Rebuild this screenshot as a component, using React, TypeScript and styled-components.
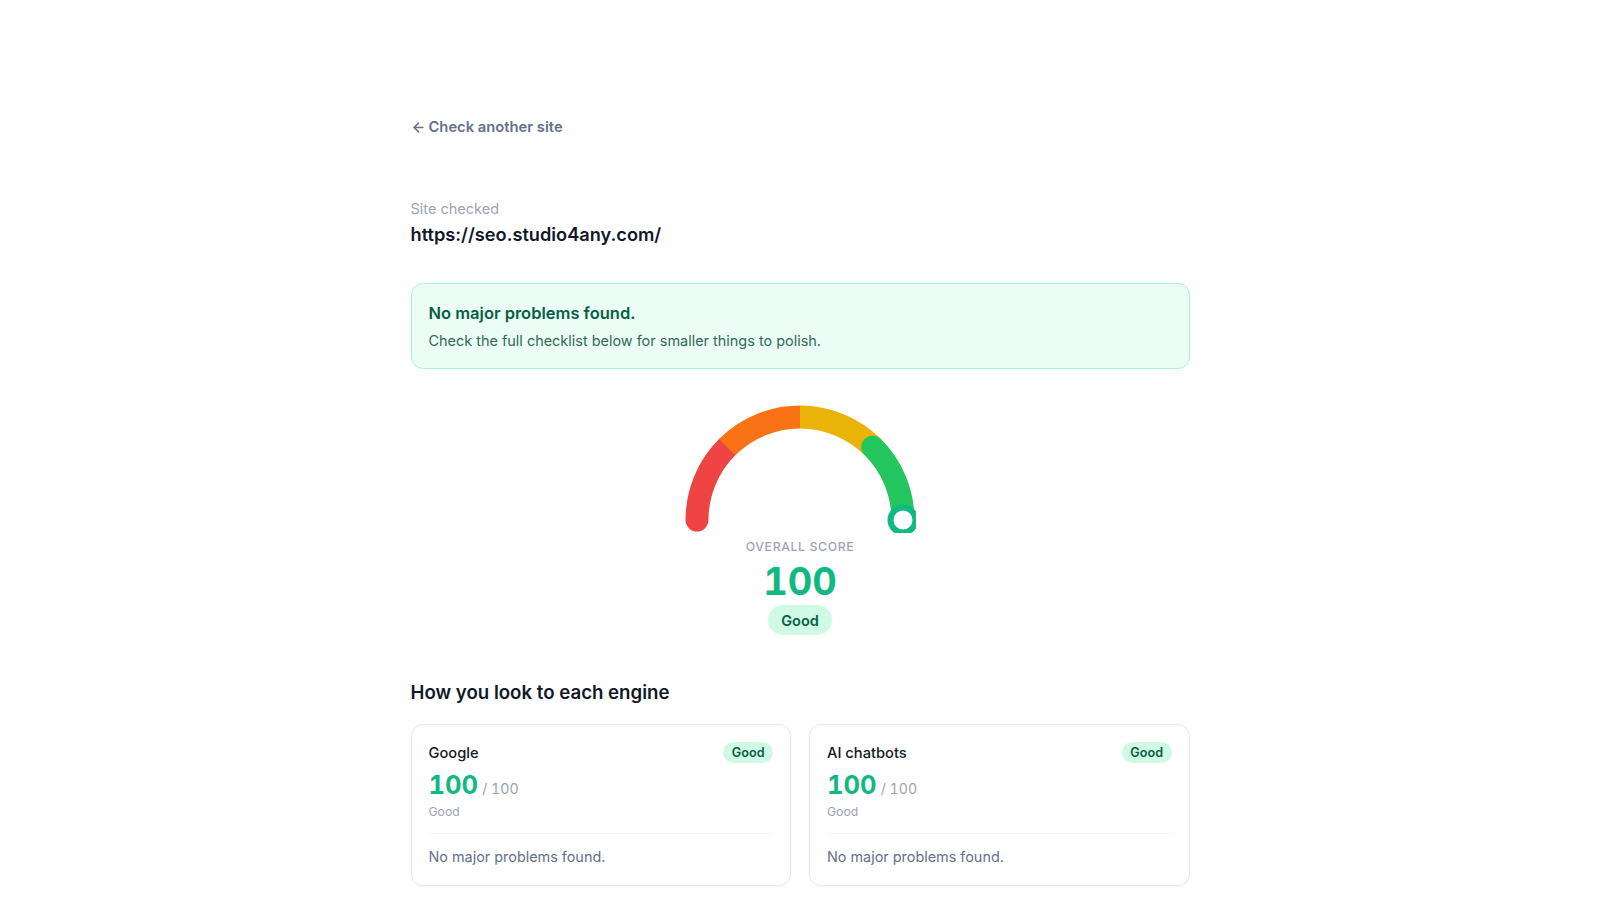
import styled, { createGlobalStyle } from "styled-components";
import { ArrowLeft } from "lucide-react";

const GlobalStyle = createGlobalStyle`
  html, body {
    margin: 0;
    background: #fff;
    font-family: "Inter", "Liberation Sans", sans-serif;
    color: #111827;
  }
`;

const Page = styled.main`
  width: 779px;
  margin: 0 auto;
  padding-top: 117px;
  height: 793px;
  overflow: hidden;
`;

const BackLink = styled.a`
  display: flex;
  align-items: center;
  gap: 3px;
  height: 20px;
  font-size: 14.75px;
  font-weight: 600;
  color: #64708b;
  text-decoration: none;
`;

const SiteBlock = styled.section`
  margin-top: 62px;
`;

const SiteLabel = styled.div`
  font-size: 14.5px;
  line-height: 20px;
  color: #9ca3b8;
`;

const SiteUrl = styled.div`
  margin-top: 1px;
  font-size: 18.2px;
  line-height: 28px;
  font-weight: 600;
  color: #111827;
`;

const Banner = styled.section`
  box-sizing: border-box;
  height: 86px;
  margin-top: 35px;
  padding: 18px 17px;
  border: 1px solid #a7f3d0;
  border-radius: 12px;
  background: #ecfdf5;
`;

const BannerTitle = styled.div`
  font-size: 16.5px;
  line-height: 22px;
  font-weight: 600;
  color: #065f46;
`;

const BannerText = styled.div`
  margin-top: 7px;
  font-size: 14.45px;
  line-height: 20px;
  color: #2f6b58;
`;

const Score = styled.section`
  display: flex;
  flex-direction: column;
  align-items: center;
  margin-top: 31px;
`;

const GaugeSvg = styled.svg`
  display: block;
  width: 232px;
  height: 133px;
`;

const ScoreLabel = styled.div`
  margin-top: 5px;
  font-size: 12.3px;
  line-height: 18px;
  font-weight: 500;
  letter-spacing: 0.6px;
  color: #9ca3b8;
`;

const ScoreValue = styled.div`
  margin-top: 4px;
  font-size: 38px;
  line-height: 42px;
  font-weight: 700;
  font-variant-numeric: tabular-nums;
  color: #10b981;
`;

const ScorePill = styled.div`
  display: flex;
  align-items: center;
  height: 30px;
  margin-top: 3px;
  padding: 0 13px;
  border-radius: 15px;
  background: #d1fae5;
  font-size: 14.5px;
  font-weight: 600;
  color: #065f46;
`;

const SectionTitle = styled.h2`
  margin: 43px 0 0;
  font-size: 18.65px;
  line-height: 28px;
  font-weight: 600;
  color: #111827;
`;

const CardGrid = styled.div`
  display: grid;
  grid-template-columns: 1fr 1fr;
  gap: 18px;
  margin-top: 18px;
`;

const Card = styled.article`
  box-sizing: border-box;
  height: 162px;
  padding: 17px;
  border: 1px solid #e5e7eb;
  border-radius: 12px;
  box-shadow: 0 1px 2px rgba(0, 0, 0, 0.05);
`;

const CardHead = styled.div`
  display: flex;
  justify-content: space-between;
  align-items: center;
  height: 21px;
`;

const CardName = styled.div`
  font-size: 14.7px;
  font-weight: 500;
  color: #111827;
`;

const CardPill = styled.div`
  display: flex;
  align-items: center;
  height: 21px;
  padding: 0 8.5px;
  border-radius: 11px;
  background: #d1fae5;
  font-size: 12.6px;
  font-weight: 600;
  color: #065f46;
`;

const CardScore = styled.div`
  display: flex;
  align-items: baseline;
  gap: 4px;
  height: 36px;
  margin-top: 4px;
  line-height: 36px;
`;

const CardValue = styled.span`
  font-size: 25.6px;
  font-weight: 700;
  font-variant-numeric: tabular-nums;
  color: #10b981;
`;

const CardMax = styled.span`
  font-size: 14.2px;
  font-variant-numeric: tabular-nums;
  color: #9ca3af;
`;

const CardStatus = styled.div`
  font-size: 12.2px;
  line-height: 18px;
  color: #9ca3b8;
`;

const CardNote = styled.div`
  margin-top: 12px;
  padding-top: 13px;
  border-top: 1px solid #f3f4f6;
  font-size: 14.4px;
  line-height: 20px;
  color: #64708b;
`;

const engines = ["Google", "AI chatbots"];

function polar(angle: number) {
  const rad = (angle * Math.PI) / 180;
  return `${116 + 103 * Math.cos(rad)} ${120 - 103 * Math.sin(rad)}`;
}

function arc(from: number, to: number) {
  return `M${polar(from)} A103 103 0 0 1 ${polar(to)}`;
}

function Gauge() {
  return (
    <GaugeSvg viewBox="0 0 232 133">
      <g fill="none" strokeWidth="23">
        <path d={arc(180, 135)} stroke="#ef4444" strokeLinecap="round" />
        <path d={arc(135, 90)} stroke="#f97316" />
        <path d={arc(90, 45)} stroke="#eab308" />
        <path d={arc(45, 0)} stroke="#22c55e" strokeLinecap="round" />
      </g>
      <circle cx="219" cy="120" r="12.5" fill="#fff" stroke="#10b981" strokeWidth="6" />
    </GaugeSvg>
  );
}

export default function App() {
  return (
    <Page>
      <GlobalStyle />
      <BackLink href="#">
        <ArrowLeft size={15} strokeWidth={2.4} />
        Check another site
      </BackLink>
      <SiteBlock>
        <SiteLabel>Site checked</SiteLabel>
        <SiteUrl>https://seo.studio4any.com/</SiteUrl>
      </SiteBlock>
      <Banner>
        <BannerTitle>No major problems found.</BannerTitle>
        <BannerText>Check the full checklist below for smaller things to polish.</BannerText>
      </Banner>
      <Score>
        <Gauge />
        <ScoreLabel>OVERALL SCORE</ScoreLabel>
        <ScoreValue>100</ScoreValue>
        <ScorePill>Good</ScorePill>
      </Score>
      <SectionTitle>How you look to each engine</SectionTitle>
      <CardGrid>
        {engines.map((name) => (
          <Card key={name}>
            <CardHead>
              <CardName>{name}</CardName>
              <CardPill>Good</CardPill>
            </CardHead>
            <CardScore>
              <CardValue>100</CardValue>
              <CardMax>/ 100</CardMax>
            </CardScore>
            <CardStatus>Good</CardStatus>
            <CardNote>No major problems found.</CardNote>
          </Card>
        ))}
      </CardGrid>
    </Page>
  );
}
